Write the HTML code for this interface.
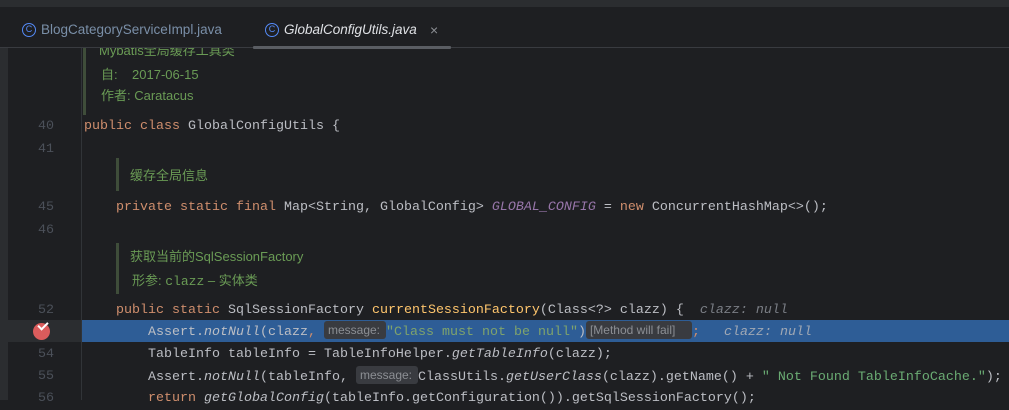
<!DOCTYPE html>
<html><head><meta charset="utf-8"><style>
*{margin:0;padding:0;box-sizing:border-box}
body{width:1009px;height:400px;overflow:hidden;background:#1e1f22;position:relative;font-family:"Liberation Mono",monospace;font-size:13.33px;color:#bcbec4}
.abs{position:absolute}
.top{left:0;top:0;width:1009px;height:7px;background:#2b2d30}
.tabs{left:0;top:7px;width:1009px;height:41px;background:#1e1f22;border-bottom:1px solid #393b40;font-family:"Liberation Sans",sans-serif;font-size:13.5px;z-index:3}
.tab{position:absolute;top:15px;height:16px;line-height:16px;color:#7a8fa8;display:flex;align-items:center}
.ic{display:inline-block;width:14px;height:14px;border:1.3px solid #548af7;border-radius:50%;font-size:9px;line-height:11px;text-align:center;color:#548af7;margin-right:5px;font-style:normal}
.strip{left:0;top:48px;width:8px;height:352px;background:#2b2d30}
.sep{left:81px;top:48px;width:1px;height:352px;background:#313438}
.ln{position:absolute;left:8px;width:46px;text-align:right;color:#4b5059;height:22px;line-height:22px}
.code{position:absolute;left:84px;height:22px;line-height:22px;white-space:pre}
.k{color:#cf8e6d}.m{color:#ffc66d}.i{font-style:italic}.p{color:#9876aa;font-style:italic}.s{color:#6aab73}.g{color:#7a7e85;font-style:italic}
.doc{position:absolute;font-family:"Liberation Sans","Noto Sans CJK SC",sans-serif;font-size:13px;color:#6a9b55;white-space:pre}
.bar{position:absolute;width:3px;background:#3f4d3a}
.hint{display:inline-block;background:#393b40;color:#8c8f94;font-family:"Liberation Sans",sans-serif;font-size:12px;border-radius:3px;height:18px;line-height:18px;padding:0 4px;vertical-align:1px}
.hl{left:82px;top:320px;width:927px;height:22px;background:#2e5d96}
.hlg{left:8px;top:320px;width:73px;height:22px;background:#2b2d30}
</style></head><body>
<div class="abs top"></div>
<div class="abs tabs">
 <div class="tab" style="left:22px"><span class="ic">C</span>BlogCategoryServiceImpl.java</div>
 <div class="tab" style="left:265px;color:#dfe1e5;font-style:italic"><span class="ic">C</span>GlobalConfigUtils.java</div>
 <div class="tab" style="left:430px;color:#8c8f94;font-size:14px">×</div>
 <div class="abs" style="left:253px;top:39px;width:198px;height:3px;background:#5a5d63;border-radius:1px"></div>
</div>
<div class="abs strip"></div>
<div class="abs sep"></div>
<div class="abs hl"></div><div class="abs hlg"></div>

<div class="bar" style="left:83px;top:40px;height:75px"></div>
<div class="doc" style="left:99px;top:40px">Mybatis全局缓存工具类</div>
<div class="doc" style="left:101px;top:64px">自:    2017-06-15</div>
<div class="doc" style="left:101px;top:85px">作者: Caratacus</div>

<div class="ln" style="top:116px">40</div><div class="code" style="top:116px"><span class="k">public class</span> GlobalConfigUtils {</div>
<div class="ln" style="top:139px">41</div>
<div class="bar" style="left:116px;top:158px;height:33px"></div>
<div class="doc" style="left:130px;top:165px">缓存全局信息</div>
<div class="ln" style="top:197px">45</div><div class="code" style="top:197px">    <span class="k">private static final</span> Map&lt;String, GlobalConfig&gt; <span class="p">GLOBAL_CONFIG</span> = <span class="k">new</span> ConcurrentHashMap&lt;&gt;();</div>
<div class="ln" style="top:220px">46</div>
<div class="bar" style="left:116px;top:243px;height:51px"></div>
<div class="doc" style="left:130px;top:246px">获取当前的SqlSessionFactory</div>
<div class="doc" style="left:132px;top:270px">形参: <span style="font-family:'Liberation Mono',monospace">clazz</span> – 实体类</div>
<div class="ln" style="top:300px">52</div><div class="code" style="top:300px">    <span class="k">public static</span> SqlSessionFactory <span class="m">currentSessionFactory</span>(Class&lt;?&gt; clazz) {  <span class="g">clazz: null</span></div>
<div class="abs" style="left:33px;top:323px;width:17px;height:17px;border-radius:50%;background:#db5c5c"></div>
<div class="abs" style="left:38px;top:322px;width:10px;height:6px;border-left:2px solid #fff;border-bottom:2px solid #fff;transform:rotate(-45deg)"></div>
<div class="code" style="top:321px">        Assert.<span class="i">notNull</span>(clazz<span class="k">,</span> <span class="hint" style="width:62px">message:</span><span class="s" style="color:#7fa36c">"Class must not be null"</span>)<span class="hint" style="width:106px">[Method will fail]</span><span class="k">;</span>   <span class="g" style="color:#a0a8b4">clazz: null</span></div>
<div class="ln" style="top:344px">54</div><div class="code" style="top:344px">        TableInfo tableInfo = TableInfoHelper.<span class="i">getTableInfo</span>(clazz);</div>
<div class="ln" style="top:366px">55</div><div class="code" style="top:366px">        Assert.<span class="i">notNull</span>(tableInfo, <span class="hint" style="width:62px">message:</span>ClassUtils.<span class="i">getUserClass</span>(clazz).getName() + <span class="s">" Not Found TableInfoCache."</span>);</div>
<div class="ln" style="top:388px">56</div><div class="code" style="top:388px">        <span class="k">return</span> <span class="i">getGlobalConfig</span>(tableInfo.getConfiguration()).getSqlSessionFactory();</div>
</body></html>
